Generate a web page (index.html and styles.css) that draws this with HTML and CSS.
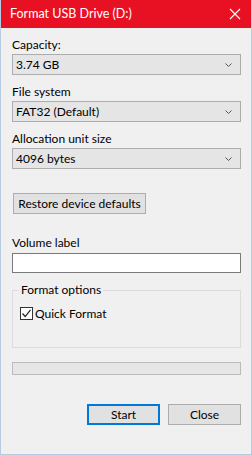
FILE: index.html
```html
<!DOCTYPE html>
<html>
<head>
<title>Format USB Drive (D:)</title>
<link rel="stylesheet" href="styles.css">
</head>
<body>
<div class="window">
  <div class="titlebar">
    <span class="title">Format USB Drive (D:)</span>
    <svg class="close-x" width="12" height="12" viewBox="0 0 12 12">
      <path d="M1 1 L11 11 M11 1 L1 11" stroke="#fff" stroke-width="1.1" fill="none"/>
    </svg>
  </div>

  <div class="content">
    <div class="field">
      <label>Capacity:</label>
      <div class="combo">
        <span>3.74 GB</span>
        <svg class="chev" width="9" height="5" viewBox="0 0 9 5"><path d="M1.5 0.5 L4.5 3.5 L7.5 0.5" stroke="#555" fill="none"/></svg>
      </div>
    </div>

    <div class="field">
      <label>File system</label>
      <div class="combo">
        <span>FAT32 (Default)</span>
        <svg class="chev" width="9" height="5" viewBox="0 0 9 5"><path d="M1.5 0.5 L4.5 3.5 L7.5 0.5" stroke="#555" fill="none"/></svg>
      </div>
    </div>

    <div class="field">
      <label>Allocation unit size</label>
      <div class="combo">
        <span>4096 bytes</span>
        <svg class="chev" width="9" height="5" viewBox="0 0 9 5"><path d="M1.5 0.5 L4.5 3.5 L7.5 0.5" stroke="#555" fill="none"/></svg>
      </div>
    </div>

    <button class="btn restore">Restore device defaults</button>

    <div class="field volume">
      <label>Volume label</label>
      <input type="text" class="textbox">
    </div>

    <fieldset class="group">
      <legend>Format options</legend>
      <div class="check-row">
        <span class="checkbox">
          <svg width="11" height="11" viewBox="0 0 11 11"><path d="M1.5 5.5 L4.2 8.5 L9.5 1.8" stroke="#222" stroke-width="1.2" fill="none"/></svg>
        </span>
        <span>Quick Format</span>
      </div>
    </fieldset>

    <div class="progress"></div>

    <div class="actions">
      <button class="btn default">Start</button>
      <button class="btn">Close</button>
    </div>
  </div>
</div>
</body>
</html>
```

FILE: styles.css
```css
body {
  margin: 0;
  padding: 0;
  font-family: Lato, "Noto Sans", sans-serif;
  font-size: 12px;
  color: #000;
  background-color: #f0f0f0;
}

.window {
  width: 250px;
  height: 454px;
  border: 1px solid #b9cbe0;
  border-top: none;
  background-color: #f0f0f0;
}

.titlebar {
  height: 28px;
  background-color: #e81123;
  color: #fff;
  display: flex;
  align-items: center;
  justify-content: space-between;
  padding: 0 8px 0 9px;
  font-size: 12.5px;
}

.title {
  margin-top: -2px;
}

.close-x {
  margin-right: 2px;
}

.content {
  padding: 9px 10px 0 11px;
  display: flex;
  flex-direction: column;
}

.field {
  margin-bottom: 9px;
}

label {
  display: block;
  line-height: 16px;
  margin-bottom: 1px;
}

.combo {
  height: 19px;
  border: 1px solid #adadad;
  background-color: #e5e5e5;
  display: flex;
  align-items: center;
  justify-content: space-between;
  padding: 0 7px 0 3px;
}

.chev {
  margin-top: 1px;
}

.btn {
  font-family: Lato, "Noto Sans", sans-serif;
  font-size: 12px;
  height: 21px;
  background-color: #e1e1e1;
  border: 1px solid #adadad;
  padding: 0;
  color: #000;
}

.restore {
  align-self: flex-start;
  width: 133px;
  margin: 15px 0 0 1px;
}

.volume {
  margin-top: 21px;
  margin-bottom: 0;
}

.volume label {
  margin-bottom: 2px;
}

.textbox {
  display: block;
  width: 229px;
  height: 20px;
  box-sizing: border-box;
  border: 1px solid #7a7a7a;
  background-color: #fff;
  margin: 0;
}

.group {
  box-sizing: border-box;
  margin: 10px 0 0 0;
  padding: 0 7px;
  height: 65px;
  border: 1px solid #dcdcdc;
}

.group legend {
  padding: 0 2px;
  margin-left: -1px;
  line-height: 14px;
}

.check-row {
  display: flex;
  align-items: center;
  gap: 2px;
  margin-top: 9px;
}

.checkbox {
  width: 11px;
  height: 11px;
  border: 1px solid #333;
  background-color: #fff;
  display: flex;
}

.progress {
  margin-top: 14px;
  height: 11px;
  border: 1px solid #bcbcbc;
  background-color: #e6e6e6;
}

.actions {
  display: flex;
  justify-content: flex-end;
  gap: 8px;
  margin-top: 29px;
}

.actions .btn {
  width: 73px;
}

.default {
  border: 2px solid #0078d7;
}
```
